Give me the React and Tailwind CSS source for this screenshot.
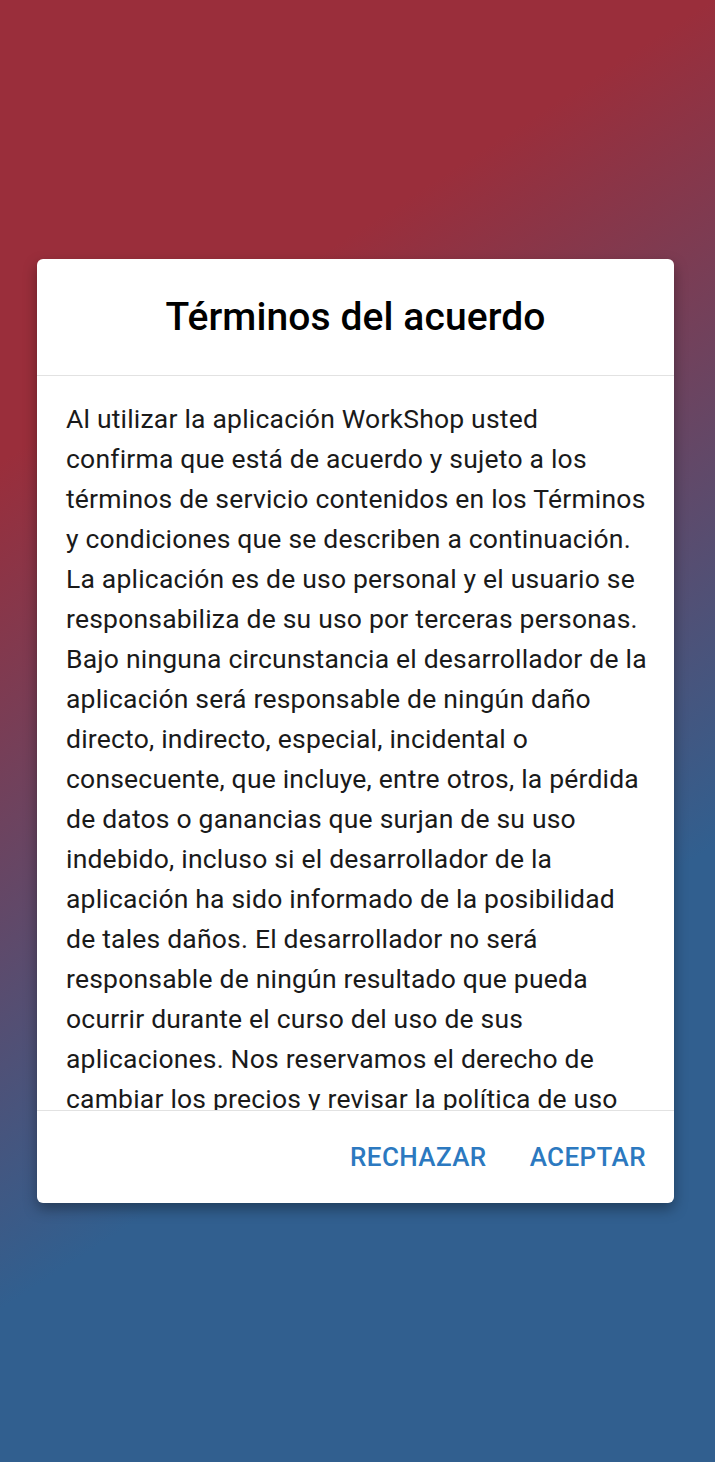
const terms =
  "Al utilizar la aplicación WorkShop usted confirma que está de acuerdo y sujeto a los términos de servicio contenidos en los Términos y condiciones que se describen a continuación. La aplicación es de uso personal y el usuario se responsabiliza de su uso por terceras personas. Bajo ninguna circunstancia el desarrollador de la aplicación será responsable de ningún daño directo, indirecto, especial, incidental o consecuente, que incluye, entre otros, la pérdida de datos o ganancias que surjan de su uso indebido, incluso si el desarrollador de la aplicación ha sido informado de la posibilidad de tales daños. El desarrollador no será responsable de ningún resultado que pueda ocurrir durante el curso del uso de sus aplicaciones. Nos reservamos el derecho de cambiar los precios y revisar la política de uso de recursos en cualquier momento y sin previo aviso.";

export default function App() {
  return (
    <div
      className="h-[1462px] w-full flex items-center pl-[37px] bg-[linear-gradient(147deg,#9a2e3b_24%,#315f8f_68%)]"
      style={{ fontFamily: "Roboto, 'Noto Sans', sans-serif" }}
    >
      {/* dialog */}
      <div className="w-[637px] h-[944px] bg-white rounded-md shadow-[0_6px_14px_rgba(0,0,0,0.35)] flex flex-col overflow-hidden">
        <div className="h-[117px] shrink-0 flex items-center justify-center border-b border-[#e2e2e2]">
          <h1 className="text-[39px] font-medium text-black tracking-[0.1px]">
            Términos del acuerdo
          </h1>
        </div>

        <div className="flex-1 overflow-hidden pt-[23px] pl-[29px] pr-[26px]">
          <p className="text-[26.5px] leading-[40px] text-[#1a1a1a] tracking-[0.2px]">
            {terms}
          </p>
        </div>

        <div className="h-[93px] shrink-0 border-t border-[#e2e2e2] flex items-center justify-end gap-[43px] pr-[28px]">
          <button className="text-[26px] leading-[32px] font-medium text-[#2c79c0] tracking-[0.4px]">
            RECHAZAR
          </button>
          <button className="text-[26px] leading-[32px] font-medium text-[#2c79c0] tracking-[0.4px]">
            ACEPTAR
          </button>
        </div>
      </div>
    </div>
  );
}
